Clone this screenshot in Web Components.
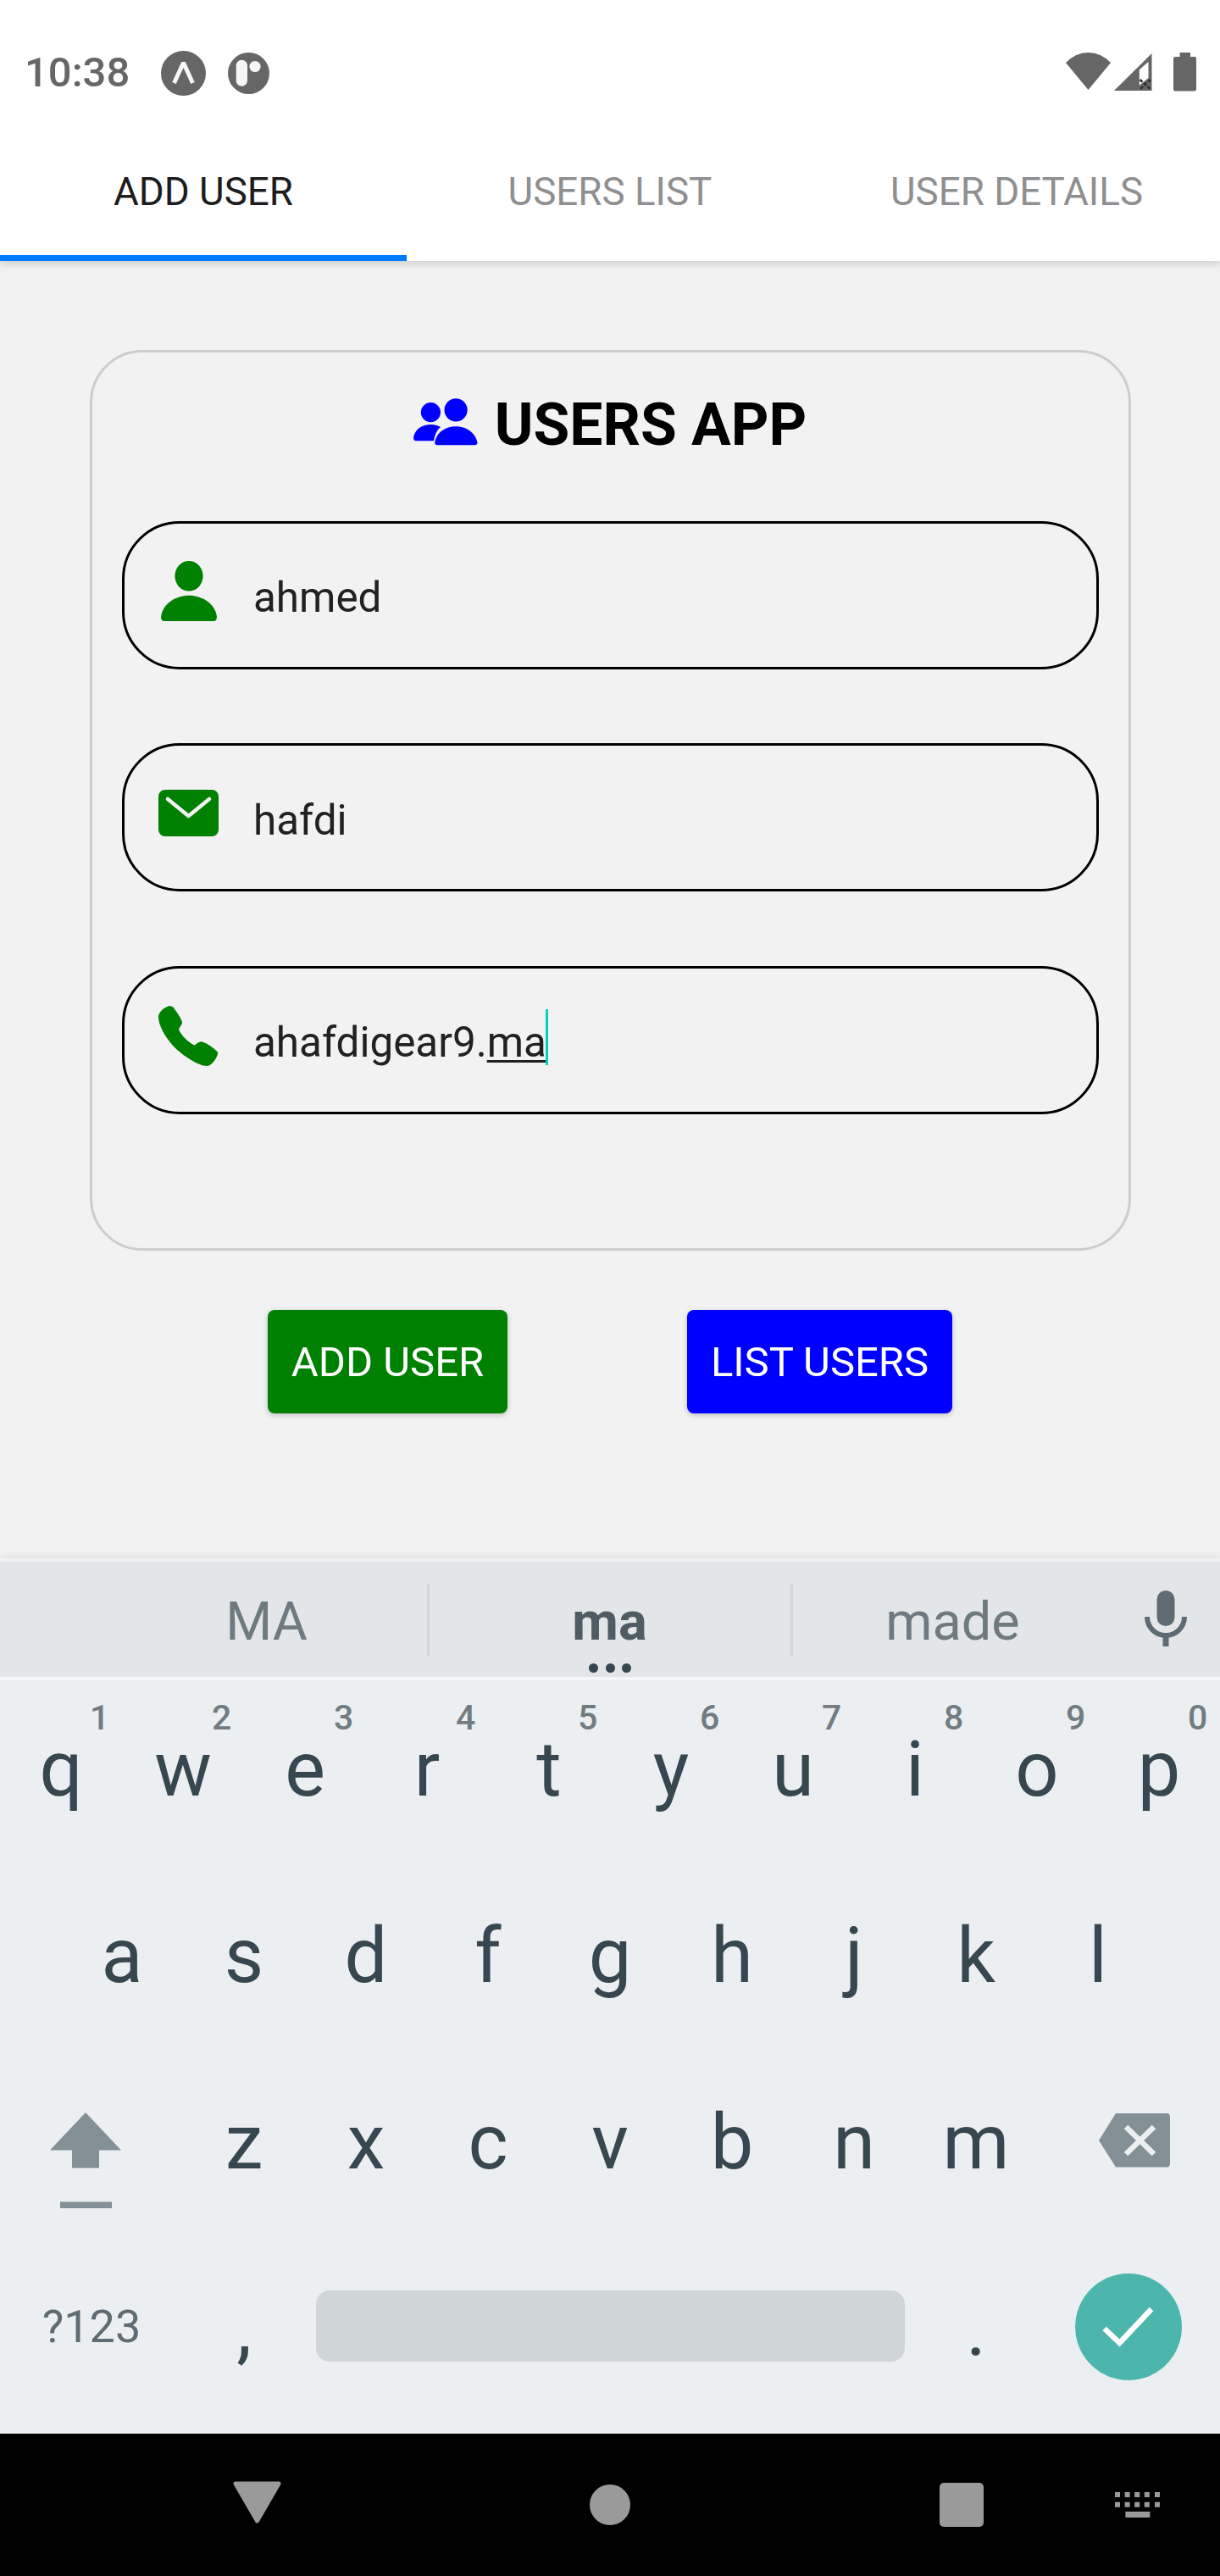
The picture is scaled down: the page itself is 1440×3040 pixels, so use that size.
<!DOCTYPE html>
<html lang="en">
<head>
<meta charset="utf-8">
<title>Users App</title>
<style>
html,body{margin:0;padding:0;background:#f2f2f2;font-family:Roboto,"Liberation Sans",sans-serif;}
body{width:1440px;height:3040px;overflow:hidden;}
</style>
</head>
<body>
<phone-screen>
  <status-bar slot="status">10:38</status-bar>
  <tab-bar slot="tabs">
    <tab-item active>ADD USER</tab-item>
    <tab-item>USERS LIST</tab-item>
    <tab-item>USER DETAILS</tab-item>
  </tab-bar>
  <user-card slot="main" heading="USERS APP">
    <form-field icon="person">ahmed</form-field>
    <form-field icon="mail">hafdi</form-field>
    <form-field icon="phone">ahafdigear9.<field-composing>ma</field-composing></form-field>
  </user-card>
  <button-row slot="main">
    <app-button color="#008000" width="283">ADD USER</app-button>
    <app-button color="#0000ff" width="313">LIST USERS</app-button>
  </button-row>
  <soft-keyboard slot="keyboard">
    <suggestion-bar slot="suggest">
      <suggest-item>MA</suggest-item>
      <suggest-item strong>ma</suggest-item>
      <suggest-item>made</suggest-item>
    </suggestion-bar>
    <key-row>
      <key-cap hint="1">q</key-cap><key-cap hint="2">w</key-cap><key-cap hint="3">e</key-cap><key-cap hint="4">r</key-cap><key-cap hint="5">t</key-cap><key-cap hint="6">y</key-cap><key-cap hint="7">u</key-cap><key-cap hint="8">i</key-cap><key-cap hint="9">o</key-cap><key-cap hint="0">p</key-cap>
    </key-row>
    <key-row inset>
      <key-cap>a</key-cap><key-cap>s</key-cap><key-cap>d</key-cap><key-cap>f</key-cap><key-cap>g</key-cap><key-cap>h</key-cap><key-cap>j</key-cap><key-cap>k</key-cap><key-cap>l</key-cap>
    </key-row>
    <key-row>
      <key-cap wide glyph="shift"></key-cap><key-cap>z</key-cap><key-cap>x</key-cap><key-cap>c</key-cap><key-cap>v</key-cap><key-cap>b</key-cap><key-cap>n</key-cap><key-cap>m</key-cap><key-cap wide glyph="back"></key-cap>
    </key-row>
    <key-row>
      <key-cap wide small>?123</key-cap><key-cap>,</key-cap><key-cap glyph="space"></key-cap><key-cap>.</key-cap><key-cap wide glyph="enter"></key-cap>
    </key-row>
  </soft-keyboard>
  <nav-bar slot="nav"></nav-bar>
</phone-screen>

<script>
function make(name, html, setup){
  customElements.define(name, class extends HTMLElement{
    constructor(){
      super();
      this.attachShadow({mode:'open'});
    }
    connectedCallback(){
      if(this.shadowRoot.childNodes.length) return;
      this.shadowRoot.innerHTML = typeof html==='function' ? html(this) : html;
      if(setup) setup(this);
    }
  });
}

make('phone-screen', `<style>
:host{display:flex;flex-direction:column;width:1440px;height:3040px;background:#f2f2f2;font-family:Roboto,"Liberation Sans",sans-serif;}
header{flex:none;background:#fff;box-shadow:0 3px 9px rgba(0,0,0,.16);position:relative;z-index:2;}
main{flex:1;min-height:0;display:flex;flex-direction:column;}
</style>
<header><slot name="status"></slot><slot name="tabs"></slot></header>
<main><slot name="main"></slot></main>
<slot name="keyboard"></slot>
<slot name="nav"></slot>`);

make('status-bar', `<style>
:host{display:flex;align-items:center;box-sizing:border-box;height:150px;padding:22px 28px 0 29px;color:#666;}
.t{font-size:49px;line-height:56px;font-weight:500;width:161px;}
.l{display:flex;align-items:center;}
.r{margin-left:auto;display:flex;align-items:flex-start;}
svg{display:block;}
</style>
<div class="t"><slot></slot></div>
<div class="l">
<svg width="53" height="53" viewBox="0 0 53 53"><circle cx="26.5" cy="26.5" r="26.5" fill="#666"/><path d="M15.5 38 26.5 14 37.5 38" fill="none" stroke="#f6f6f6" stroke-width="5" stroke-linejoin="bevel"/></svg>
<svg width="49" height="49" viewBox="0 0 49 49" style="margin-left:26px"><circle cx="24.5" cy="24.5" r="24.5" fill="#666"/><rect x="9.7" y="8.7" width="13.3" height="31" rx="6.6" fill="#f6f6f6"/><circle cx="32" cy="16.5" r="6.6" fill="#f6f6f6"/></svg>
</div>
<div class="r" style="height:46px;margin-top:-2px">
<svg width="53" height="44" viewBox="0 0 53 44"><path d="M0 12A35.3 35.3 0 0 1 53 12L26.5 44Z" fill="#666"/></svg>
<svg width="45" height="44" viewBox="0 0 45 44" style="margin-left:4.5px;margin-top:1px"><path d="M44.5 0V44H0Z" fill="#666"/><path d="M40.5 10 29.8 19.3V37.7L40.5 29Z" fill="#fff"/><path d="M30.5 31 43 42.5M43 31 30.5 42.5" stroke="#333" stroke-width="2.6" stroke-dasharray="4 2" fill="none"/></svg>
<svg width="27" height="46" viewBox="0 0 27 46" style="margin-left:25px"><path d="M7.6 0H20V5H25Q27 5 27 7V43.5Q27 45.5 25 45.5H2Q0 45.5 0 43.5V7Q0 5 2 5H7.6Z" fill="#666"/></svg>
</div>`);

make('tab-bar', `<style>:host{display:flex;height:158px;}</style><slot></slot>`);
make('tab-item', el=>`<style>
:host{flex:1;box-sizing:border-box;display:flex;align-items:center;justify-content:center;height:158px;padding-top:2px;padding-bottom:7px;font-size:45.7px;color:#8f8f8f;}
:host([active]){color:#1d1d1d;border-bottom:7px solid #007aff;padding-bottom:0;}
</style><slot></slot>`);

make('user-card', el=>`<style>
:host{display:flex;flex-direction:column;align-items:center;box-sizing:border-box;width:1229px;height:1063px;margin:104.5px 0 0 105.5px;border:3.5px solid #cdcdcd;border-radius:62px;padding-top:45px;}
.h{display:flex;align-items:center;height:80px;margin-bottom:74px;gap:20px;font-weight:700;font-size:69.5px;color:#000;line-height:80px;}
.h span{padding-top:3px;}
.h svg{display:block;margin-top:-6px;}
.f{display:flex;flex-direction:column;gap:87.5px;width:1153px;}
</style>
<div class="h">
<svg width="76" height="56" viewBox="0 0 76 56" fill="#0000ff"><circle cx="50.1" cy="13.8" r="13.6"/><circle cx="20.4" cy="16.6" r="11.6"/><path d="M3 50.3Q0 50 0 47C1 38 9 31 20 31C25 31 29 32 32 34C28 37 25 43 24 50.3Z"/><path d="M28 55.3Q25 55.3 25.3 52C27 41 37 33.3 50 33.3C63 33.3 73 41 75.5 52Q75.5 55.3 72 55.3Z"/></svg>
<span>${el.getAttribute('heading')}</span>
</div>
<div class="f"><slot></slot></div>`);

const fieldIcons = {
 person:`<svg width="66" height="71" viewBox="0 0 66 71" fill="#008000"><ellipse cx="33" cy="17.8" rx="16.6" ry="17.8"/><path d="M4 71Q0 71 0 66C2 50 18 40.7 33 40.7C48 40.7 64 50 66 66Q66 71 62 71Z"/></svg>`,
 mail:`<svg width="71" height="55" viewBox="0 0 71 55"><rect width="71" height="55" rx="8" fill="#008000"/><path d="M11 11 35.5 31 60 11" fill="none" stroke="#f2f2f2" stroke-width="4.5" stroke-linecap="round" stroke-linejoin="round"/></svg>`,
 phone:`<svg width="71" height="71" viewBox="0 0 71 71" fill="#008000"><path d="M12 .5C15 0 17 1 18.5 3C22 8 26 13 28 19C28.5 22 25 25 24 28C27 35 35 43 42.5 46.5C45 45 48 42 51 42.3C57 44 66 50 70 55C71 58 64 71 57 71C48 71 30 60 18 48C8 37 0 23 0 13C0 8 6 2 12 .5Z"/></svg>`
};
make('form-field', el=>`<style>
:host{display:flex;align-items:center;box-sizing:border-box;height:175px;border:3.5px solid #000;border-radius:68px;padding-left:40.5px;font-size:49.4px;color:#212121;}
.i{flex:none;width:71px;display:flex;justify-content:center;margin-bottom:10px;}
svg{display:block;}
.v{margin-left:41px;padding-top:6px;line-height:56px;}
</style><div class="i">${fieldIcons[el.getAttribute('icon')]}</div><div class="v"><slot></slot></div>`);

make('field-composing', `<style>
:host{display:inline-block;position:relative;line-height:56px;}
span{text-decoration:underline;text-decoration-thickness:2.5px;text-underline-offset:4px;text-decoration-skip-ink:none;}
i{position:absolute;right:-2px;top:-11px;width:2.5px;height:66px;background:#00d3c2;}
</style><span><slot></slot></span><i></i>`);

make('button-row', `<style>:host{display:flex;justify-content:center;gap:212px;margin-top:70px;}</style><slot></slot>`);
make('app-button', el=>`<style>
:host{display:flex;align-items:center;justify-content:center;box-sizing:border-box;height:122px;width:${el.getAttribute('width')}px;padding-top:2px;border-radius:8px;background:${el.getAttribute('color')};color:#fff;font-size:49px;box-shadow:0 2px 6px rgba(0,0,0,.22);}
</style><slot></slot>`);

make('soft-keyboard', `<style>
:host{display:block;flex:none;height:1033px;background:#eceff1;box-shadow:0 -3px 8px rgba(0,0,0,.07);position:relative;}
.top{height:4px;background:#f1f3f4;}
.gap{height:4px;background:#f4f6f7;}
.rows{display:flex;flex-direction:column;margin-top:-7px;}
</style><div class="top"></div><slot name="suggest"></slot><div class="gap"></div><div class="rows"><slot></slot></div>`);

make('suggestion-bar', `<style>
:host{display:flex;align-items:center;box-sizing:border-box;height:136px;background:#e3e6e9;position:relative;}
svg{position:absolute;left:1351px;top:34px;display:block;}
i{position:absolute;top:27px;width:3.5px;height:84px;background:#d0d5d8;}
u{position:absolute;top:120px;width:11px;height:11px;border-radius:50%;background:#37474f;}
.s{display:flex;width:100%;padding-left:112px;padding-top:6px;box-sizing:border-box;}
</style>
<div class="s"><slot></slot></div>
<i style="left:503.5px"></i><i style="left:932.5px"></i>
<u style="left:695px"></u><u style="left:714.5px"></u><u style="left:734px"></u>
<svg width="50" height="66" viewBox="0 0 50 66" fill="none"><rect x="14.5" y="0" width="21" height="42" rx="10.5" fill="#5f6b72"/><path d="M3 31A22 22 0 0 0 47 31" stroke="#5f6b72" stroke-width="6"/><path d="M25 52V66" stroke="#5f6b72" stroke-width="7"/></svg>`);
make('suggest-item', `<style>
:host{display:flex;justify-content:center;width:405px;font-size:63px;line-height:72px;color:#6e7a80;}
:host([strong]){font-weight:700;color:#505c63;}
</style><slot></slot>`);

make('key-row', `<style>:host{display:flex;height:220px;}:host([inset]){padding:0 72px;}</style><slot></slot>`);

const glyphs = {
 shift:`<svg style="margin:47px 14px 0 0" width="84" height="113" viewBox="0 0 84 113" fill="#839095"><path d="M42 0 84 44.6H58V65.6H26V44.6H0Z"/><rect x="12" y="105.4" width="61" height="7.6"/></svg>`,
 back:`<svg style="margin-left:14px" width="84" height="64" viewBox="0 0 84 64"><path d="M20 0H80Q84 0 84 4V59.5Q84 63.5 80 63.5H20L0 32Z" fill="#839095"/><path d="M32 16 65 48M65 16 32 48" stroke="#eceff1" stroke-width="6.5"/></svg>`,
 space:`<div style="width:695px;height:83.5px;border-radius:16px;background:#d0d5d8;margin:-2px 0 0 1px"></div>`,
 enter:`<svg width="126" height="126" viewBox="0 0 126 126"><circle cx="63" cy="63" r="63" fill="#4db6ac"/><path d="M34.6 65 52.5 82 90 42" fill="none" stroke="#fff" stroke-width="6.5"/></svg>`
};
make('key-cap', el=>{
  const g = el.getAttribute('glyph'), h = el.getAttribute('hint');
  return `<style>
  :host{display:flex;align-items:center;justify-content:center;position:relative;flex:none;box-sizing:border-box;width:144px;height:220px;padding-top:5px;font-size:90px;line-height:106px;color:#37474f;}
  :host([wide]){width:216px;}
  :host([glyph]){padding-top:0;}
  :host([glyph="space"]){width:720px;}
  :host([small]){font-size:54px;color:#5f6b72;line-height:64px;padding-top:0;}
  b{position:absolute;right:16px;top:27px;width:22px;text-align:center;font-size:41px;line-height:48px;font-weight:500;color:#717c82;}
  svg{display:block;}
  </style>${g?glyphs[g]:'<slot></slot>'}${h?`<b>${h}</b>`:''}`;
});

make('nav-bar', `<style>
:host{display:flex;align-items:center;flex:none;height:168px;background:#000;padding-left:275px;}
svg{display:block;flex:none;}
</style>
<svg width="57" height="50" viewBox="0 0 57 50" style="margin-top:-7px"><path d="M3 3H54L28.5 47Z" fill="#9a9a9a" stroke="#9a9a9a" stroke-width="5" stroke-linejoin="round"/></svg>
<svg width="48" height="48" viewBox="0 0 48 48" style="margin-left:364px"><circle cx="24" cy="24" r="24" fill="#9a9a9a"/></svg>
<svg width="52" height="52" viewBox="0 0 52 52" style="margin-left:365px"><rect width="52" height="52" rx="5" fill="#9a9a9a"/></svg>
<svg width="54" height="30" viewBox="0 0 54 30" style="margin-left:155px" fill="#9a9a9a"><path d="M0 0h6v6H0zM11.6 0h6v6h-6zM23.2 0h6v6h-6zM34.8 0h6v6h-6zM47 0h6v6h-6zM0 11.8h6v6H0zM11.6 11.8h6v6h-6zM23.2 11.8h6v6h-6zM34.8 11.8h6v6h-6zM47 11.8h6v6h-6z"/><rect x="12.4" y="23" width="29" height="7"/></svg>`);
</script>
</body>
</html>
